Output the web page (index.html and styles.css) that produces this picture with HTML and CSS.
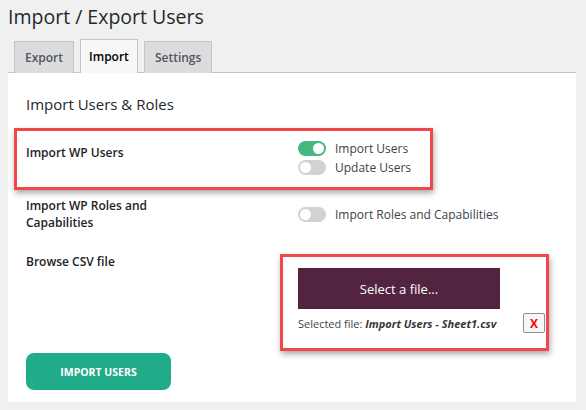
FILE: index.html
```html
<!DOCTYPE html>
<html lang="en">
<head>
  <meta charset="UTF-8" />
  <meta name="viewport" content="width=device-width, initial-scale=1" />
  <title>Import / Export Users</title>
  <link rel="stylesheet" href="styles.css">
</head>
<body>

  <div class="wrap">
    <h1>Import / Export Users</h1>

    <div class="tabs">
      <a class="tab">Export</a>
      <a class="tab active">Import</a>
      <a class="tab">Settings</a>
    </div>

    <div class="panel">
      <h2>Import Users &amp; Roles</h2>

      <div class="row row-users">
        <div class="label">Import WP Users</div>
        <div class="field">
          <label class="switch-line"><span class="switch on"></span>Import Users</label>
          <label class="switch-line"><span class="switch"></span>Update Users</label>
        </div>
      </div>

      <div class="row row-roles">
        <div class="label">Import WP Roles and<br>Capabilities</div>
        <div class="field">
          <label class="switch-line"><span class="switch"></span>Import Roles and Capabilities</label>
        </div>
      </div>

      <div class="row row-file">
        <div class="label">Browse CSV file</div>
        <div class="field">
          <button class="file-btn">Select a file...</button>
          <div class="file-info">
            <span>Selected file: <b>Import Users - Sheet1.csv</b></span>
            <button class="file-clear">X</button>
          </div>
        </div>
      </div>

      <button class="submit">IMPORT USERS</button>

      <!-- highlight marks -->
      <span class="mark mark-users"></span>
      <span class="mark mark-file"></span>
    </div>
  </div>

</body>
</html>
```

FILE: styles.css
```css
body {
  margin: 0;
  background: #f0f0f1;
  color: #23282d;
  font-family: 'Open Sans', 'Noto Sans', sans-serif;
  font-size: 12px;
}

.wrap {
  padding: 0 10px 0 8px;
}

h1 {
  margin: 0;
  padding-top: 3px;
  height: 36px;
  font-size: 19.5px;
  font-weight: 400;
  line-height: 28px;
  color: #23282d;
}

.tabs {
  display: flex;
  align-items: flex-end;
  height: 33px;
  padding-left: 6px;
  gap: 6px;
  border-bottom: 1px solid #c3c4c7;
}

.tab {
  box-sizing: border-box;
  height: 32px;
  margin-bottom: -1px;
  padding: 0 10px;
  display: flex;
  align-items: center;
  background: #dcdcde;
  border: 1px solid #c3c4c7;
  border-bottom: none;
  color: #50575e;
  font-size: 12px;
  font-weight: 600;
}

.tab.active {
  height: 34px;
  background: #f6f7f7;
  color: #000;
  padding: 0 8px;
}

.panel {
  position: relative;
  background: #fff;
  padding: 21px 18px 12px;
}

h2 {
  margin: 0;
  font-size: 15px;
  font-weight: 400;
  line-height: 20px;
  color: #23282d;
}

.row {
  display: grid;
  grid-template-columns: 272px 1fr;
  align-items: start;
}

.label {
  font-size: 12px;
  font-weight: 600;
  line-height: 17px;
  color: #1d2327;
}

.row-users {
  margin-top: 25px;
}

.row-users .label {
  padding-top: 5px;
}

.row-roles {
  margin-top: 20px;
}

.row-roles .field {
  padding-top: 8px;
}

.row-file {
  margin-top: 22px;
}

.row-file .field {
  padding-top: 15px;
  width: 247px;
}

.switch-line {
  display: flex;
  align-items: center;
  gap: 9px;
  height: 19px;
  font-size: 12px;
  color: #3c434a;
}

.switch {
  position: relative;
  width: 28px;
  height: 15px;
  border-radius: 8px;
  background: #d2d2d2;
}

.switch::after {
  content: "";
  position: absolute;
  top: 2px;
  left: 2px;
  width: 11px;
  height: 11px;
  border-radius: 50%;
  background: #fff;
}

.switch.on {
  background: #45b882;
}

.switch.on::after {
  left: 15px;
}

.file-btn {
  display: block;
  width: 202px;
  height: 41px;
  border: none;
  background: #52243f;
  color: #fff;
  font-family: inherit;
  font-size: 13px;
}

.file-info {
  display: flex;
  justify-content: space-between;
  align-items: center;
  margin-top: 4px;
  font-size: 11px;
  color: #3c434a;
}

.file-info b {
  font-style: italic;
  font-weight: 700;
  color: #32373c;
}

.file-clear {
  width: 22px;
  height: 20px;
  padding: 0;
  border: 1px solid #8c8f94;
  border-radius: 2px;
  background: #f6f7f7;
  color: #f00;
  font-family: inherit;
  font-size: 12px;
  font-weight: 700;
}

.submit {
  display: block;
  margin-top: 20px;
  width: 145px;
  height: 37px;
  border: none;
  border-radius: 8px;
  background: #20ab89;
  color: #fff;
  font-family: inherit;
  font-size: 10.5px;
  font-weight: 700;
}

.mark {
  position: absolute;
  box-sizing: border-box;
  border: 3px solid #f2464b;
  box-shadow: 1px 3px 6px rgba(0, 0, 0, 0.35);
}

.mark-users {
  left: 6px;
  top: 55px;
  width: 419px;
  height: 62px;
}

.mark-file {
  left: 272px;
  top: 181px;
  width: 269px;
  height: 97px;
}
```
